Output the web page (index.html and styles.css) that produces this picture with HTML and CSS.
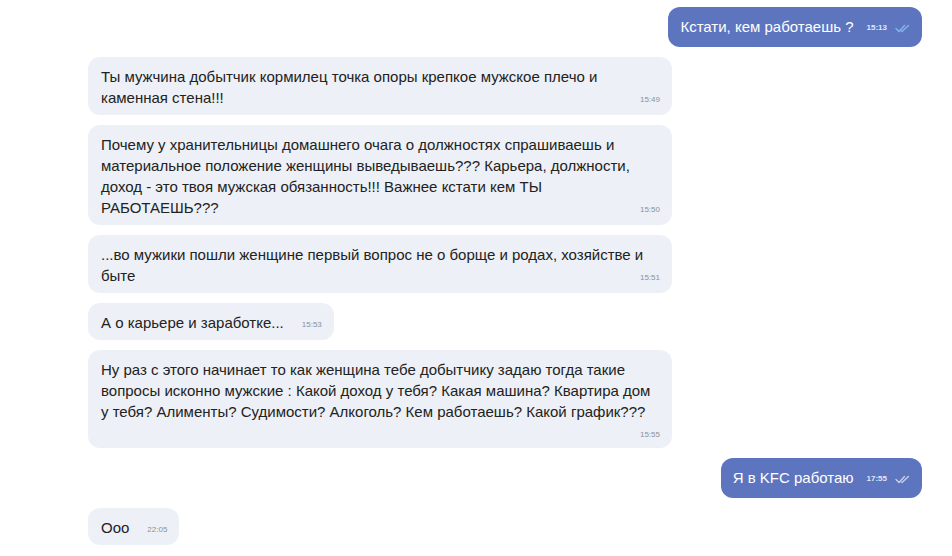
FILE: index.html
```html
<!DOCTYPE html>
<html lang="ru">
<head>
<meta charset="utf-8">
<title>Чат</title>
<link rel="stylesheet" href="styles.css">
</head>
<body>
<div class="chat">
  <div class="row out">
    <div class="bubble-out">
      <span class="text">Кстати, кем работаешь ?</span>
      <span class="time-out">15:13</span>
      <svg class="check read" width="15" height="9" viewBox="0 0 15 9"><path d="M1 4.5 L4 7.5 L9.5 1.5" fill="none" stroke="currentColor" stroke-width="1.4" stroke-linecap="round" stroke-linejoin="round"/><path d="M6.5 7.2 L7 7.5 L13.5 1.5" fill="none" stroke="currentColor" stroke-width="1.4" stroke-linecap="round" stroke-linejoin="round"/></svg>
    </div>
  </div>
  <div class="row in">
    <div class="bubble-in">Ты мужчина добытчик кормилец точка опоры крепкое мужское плечо и каменная стена!!!<span class="time">15:49</span></div>
  </div>
  <div class="row in">
    <div class="bubble-in">Почему у хранительницы домашнего очага о должностях спрашиваешь и материальное положение женщины выведываешь??? Карьера, должности, доход - это твоя мужская обязанность!!! Важнее кстати кем ТЫ РАБОТАЕШЬ???<span class="time">15:50</span></div>
  </div>
  <div class="row in">
    <div class="bubble-in">...во мужики пошли женщине первый вопрос не о борще и родах, хозяйстве и быте<span class="time">15:51</span></div>
  </div>
  <div class="row in">
    <div class="bubble-in">А о карьере и заработке...<span class="time">15:53</span></div>
  </div>
  <div class="row in">
    <div class="bubble-in">Ну раз с этого начинает то как женщина тебе добытчику задаю тогда такие вопросы исконно мужские : Какой доход у тебя? Какая машина? Квартира дом у тебя? Алименты? Судимости? Алкоголь? Кем работаешь? Какой график???<span class="time">15:55</span></div>
  </div>
  <div class="row out">
    <div class="bubble-out">
      <span class="text">Я в KFC работаю</span>
      <span class="time-out">17:55</span>
      <svg class="check sent" width="15" height="9" viewBox="0 0 15 9"><path d="M1 4.5 L4 7.5 L9.5 1.5" fill="none" stroke="currentColor" stroke-width="1.3" stroke-linecap="round" stroke-linejoin="round"/><path d="M6.5 7.2 L7 7.5 L13.5 1.5" fill="none" stroke="currentColor" stroke-width="1.3" stroke-linecap="round" stroke-linejoin="round"/></svg>
    </div>
  </div>
  <div class="row in">
    <div class="bubble-in">Ooo<span class="time">22:05</span></div>
  </div>
</div>
</body>
</html>
```

FILE: styles.css
```css
html, body {
  margin: 0;
  padding: 0;
  background: #ffffff;
}

body {
  font-family: "Liberation Sans", Arial, sans-serif;
  color: #222222;
}

.chat {
  display: flex;
  flex-direction: column;
  gap: 10px;
  padding: 7px 30px 0 88px;
}

.row {
  display: flex;
}

.row.in {
  justify-content: flex-start;
}

.row.out {
  justify-content: flex-end;
}

.bubble-in {
  display: flow-root;
  max-width: 559px;
  background: #edf0f6;
  border-radius: 12px;
  padding: 9px 12px 7px 13px;
  font-size: 15px;
  line-height: 21px;
}

.time {
  float: right;
  margin: 7px 0 0 18px;
  font-size: 8px;
  line-height: 12px;
  color: #8b909a;
}

.bubble-out {
  display: flex;
  align-items: center;
  background: #5d75bf;
  color: #ffffff;
  border-radius: 12px;
  padding: 8px 12px 9px 12px;
  font-size: 15px;
  line-height: 21px;
}

.time-out {
  margin-left: 13px;
  font-size: 8px;
  font-weight: bold;
  color: rgba(255, 255, 255, 0.85);
  padding-top: 2px;
}

.check {
  margin-left: 8px;
  margin-top: 3px;
}

.check.read {
  color: #88b4ef;
}

.check.sent {
  color: #c9d2ea;
}
```
